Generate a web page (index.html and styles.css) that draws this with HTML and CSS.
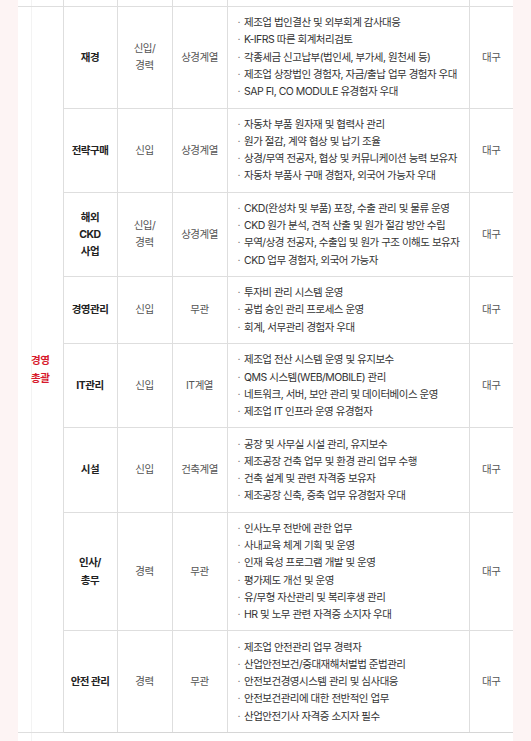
FILE: index.html
```html
<!DOCTYPE html>
<html lang="ko">
<head>
<meta charset="utf-8">
<link rel="stylesheet" href="styles.css">
</head>
<body>
<div class="page">
  <div class="card">
    <table class="jobs">
      <colgroup>
        <col class="w-cat"><col class="w-name"><col class="w-type"><col class="w-major"><col class="w-desc"><col class="w-loc">
      </colgroup>
      <tr class="prev"><td class="cat-prev"></td><td></td><td></td><td></td><td></td><td></td></tr>
      <tr class="first">
        <td class="cat" rowspan="8">경영<br>총괄</td>
        <th>재경</th>
        <td class="c">신입/<br>경력</td>
        <td class="c">상경계열</td>
        <td class="desc"><ul>
          <li>제조업 법인결산 및 외부회계 감사대응</li>
          <li>K-IFRS 따른 회계처리검토</li>
          <li>각종세금 신고납부(법인세, 부가세, 원천세 등)</li>
          <li>제조업 상장법인 경험자, 자금/출납 업무 경험자 우대</li>
          <li>SAP FI, CO MODULE 유경험자 우대</li>
        </ul></td>
        <td class="c">대구</td>
      </tr>
      <tr>
        <th>전략구매</th>
        <td class="c">신입</td>
        <td class="c">상경계열</td>
        <td class="desc"><ul>
          <li>자동차 부품 원자재 및 협력사 관리</li>
          <li>원가 절감, 계약 협상 및 납기 조율</li>
          <li>상경/무역 전공자, 협상 및 커뮤니케이션 능력 보유자</li>
          <li>자동차 부품사 구매 경험자, 외국어 가능자 우대</li>
        </ul></td>
        <td class="c">대구</td>
      </tr>
      <tr>
        <th>해외<br>CKD<br>사업</th>
        <td class="c">신입/<br>경력</td>
        <td class="c">상경계열</td>
        <td class="desc"><ul>
          <li>CKD(완성차 및 부품) 포장, 수출 관리 및 물류 운영</li>
          <li>CKD 원가 분석, 견적 산출 및 원가 절감 방안 수립</li>
          <li>무역/상경 전공자, 수출입 및 원가 구조 이해도 보유자</li>
          <li>CKD 업무 경험자, 외국어 가능자</li>
        </ul></td>
        <td class="c">대구</td>
      </tr>
      <tr>
        <th>경영관리</th>
        <td class="c">신입</td>
        <td class="c">무관</td>
        <td class="desc"><ul>
          <li>투자비 관리 시스템 운영</li>
          <li>공법 승인 관리 프로세스 운영</li>
          <li>회계, 서무관리 경험자 우대</li>
        </ul></td>
        <td class="c">대구</td>
      </tr>
      <tr>
        <th>IT관리</th>
        <td class="c">신입</td>
        <td class="c">IT계열</td>
        <td class="desc"><ul>
          <li>제조업 전산 시스템 운영 및 유지보수</li>
          <li>QMS 시스템(WEB/MOBILE) 관리</li>
          <li>네트워크, 서버, 보안 관리 및 데이터베이스 운영</li>
          <li>제조업 IT 인프라 운영 유경험자</li>
        </ul></td>
        <td class="c">대구</td>
      </tr>
      <tr>
        <th>시설</th>
        <td class="c">신입</td>
        <td class="c">건축계열</td>
        <td class="desc"><ul>
          <li>공장 및 사무실 시설 관리, 유지보수</li>
          <li>제조공장 건축 업무 및 환경 관리 업무 수행</li>
          <li>건축 설계 및 관련 자격증 보유자</li>
          <li>제조공장 신축, 증축 업무 유경험자 우대</li>
        </ul></td>
        <td class="c">대구</td>
      </tr>
      <tr>
        <th>인사/<br>총무</th>
        <td class="c">경력</td>
        <td class="c">무관</td>
        <td class="desc"><ul>
          <li>인사노무 전반에 관한 업무</li>
          <li>사내교육 체계 기획 및 운영</li>
          <li>인재 육성 프로그램 개발 및 운영</li>
          <li>평가제도 개선 및 운영</li>
          <li>유/무형 자산관리 및 복리후생 관리</li>
          <li>HR 및 노무 관련 자격증 소지자 우대</li>
        </ul></td>
        <td class="c">대구</td>
      </tr>
      <tr class="last">
        <th>안전 관리</th>
        <td class="c">경력</td>
        <td class="c">무관</td>
        <td class="desc"><ul>
          <li>제조업 안전관리 업무 경력자</li>
          <li>산업안전보건/중대재해처벌법 준법관리</li>
          <li>안전보건경영시스템 관리 및 심사대응</li>
          <li>안전보건관리에 대한 전반적인 업무</li>
          <li>산업안전기사 자격증 소지자 필수</li>
        </ul></td>
        <td class="c">대구</td>
      </tr>
    </table>
  </div>
</div>
</body>
</html>
```

FILE: styles.css
```css
html, body {
  margin: 0;
  padding: 0;
  background: #fdf4f4;
}
body {
  font-family: Inter, "Noto Sans CJK KR", sans-serif;
  font-size: 10.5px;
  letter-spacing: -0.5px;
  line-height: 17.25px;
  color: #333;
}
.page {
  padding: 0 18px;
  min-height: 741px;
}
.card {
  background: #fff linear-gradient(to right, transparent 13px, #f3f3f3 13px, #f3f3f3 14px, transparent 14px);
  min-height: 741px;
  width: 495px;
}
.jobs {
  width: 495px;
  table-layout: fixed;
  border-collapse: collapse;
}
.w-cat { width: 45px; }
.w-name { width: 54px; }
.w-type { width: 55px; }
.w-major { width: 55px; }
.w-desc { width: 242px; }
.w-loc { width: 44px; }
.jobs td, .jobs th {
  border: 1px solid #dedede;
  padding: 7.15px 0;
  line-height: 17.25px;
  vertical-align: middle;
}
.jobs tr > :first-child { border-left: none; }
.jobs tr > :last-child { border-right: none; }
.prev td {
  height: 6px;
  padding: 0;
  border-top: none;
}
.jobs th {
  font-weight: 700;
  color: #222;
  text-align: center;
}
.c {
  text-align: center;
  color: #555;
}
.cat {
  color: #d7192c;
  font-weight: 700;
  text-align: center;
  border-bottom: 1px solid #dedede;
}
.desc {
  padding-left: 10px !important;
  text-align: left;
}
.desc ul {
  list-style: none;
  margin: 0;
  padding: 0;
}
.desc li {
  height: 17.25px;
  white-space: nowrap;
}
.desc li::before {
  content: "·";
  margin-right: 4px;
  color: #777;
}
.last td, .last th {
  border-bottom: 1px solid #d6d6d6;
}
```
